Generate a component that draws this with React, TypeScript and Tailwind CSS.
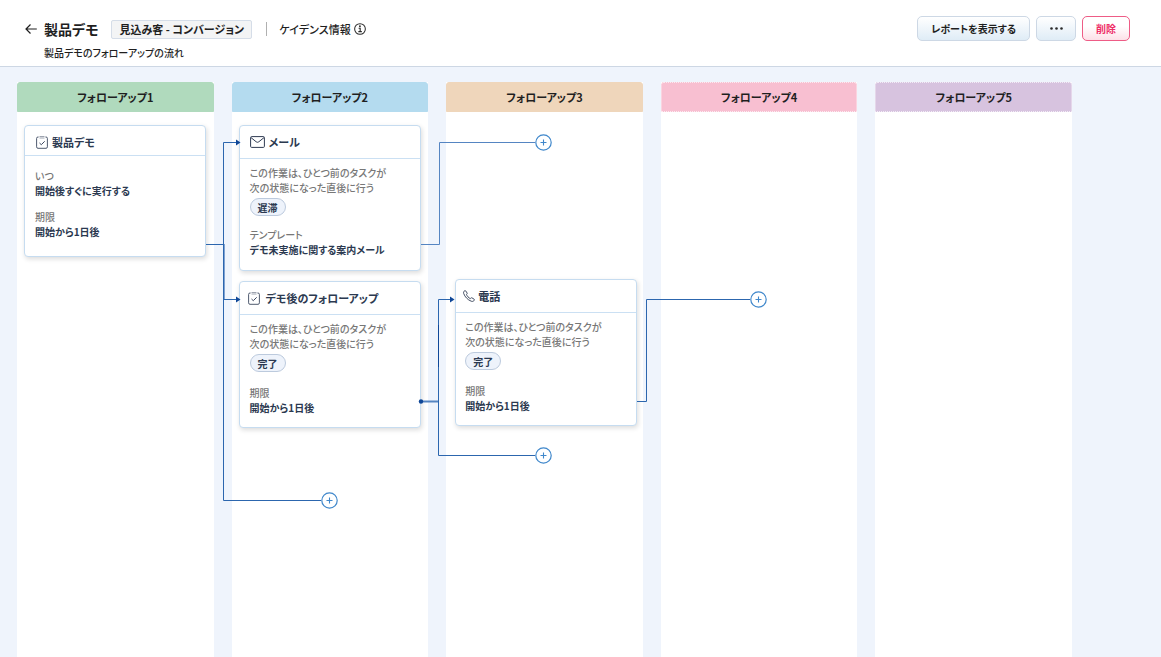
import type { ReactNode } from 'react';

function CheckIcon() {
  return (
    <svg className="h-[13px] w-3 shrink-0" viewBox="0 0 12 13" fill="none" stroke="#3c4860" strokeWidth="0.9" aria-hidden="true">
      <path d="M2.6 1H2Q.6 1 .6 2.4V10.8Q.6 12.3 2 12.3H10Q11.4 12.3 11.4 10.8V2.4Q11.4 1 10 1H9.4" />
      <path d="M3.5 .5H8.5M3.5 2H8.5" strokeWidth="0.5" />
      <path d="M3.5 7L5.3 8.7L8.7 5.3" strokeWidth="1" />
    </svg>
  );
}

function MailIcon() {
  return (
    <svg className="h-3 w-[15px] shrink-0" viewBox="0 0 15 12" fill="none" stroke="#2f3b52" strokeWidth="1" aria-hidden="true">
      <rect x=".6" y=".6" width="13.8" height="10.8" rx="1" />
      <path d="M1 1.6L6.2 5.8Q7.5 6.8 8.8 5.8L14 1.6" />
    </svg>
  );
}

function PhoneIcon() {
  return (
    <svg className="h-3 w-3 shrink-0" viewBox="0 0 12 12" fill="none" stroke="#2f3b52" strokeWidth="0.9" strokeLinejoin="round" aria-hidden="true">
      <path d="M1.1 1.2C1.7.5 2.3.4 2.7.9L4.1 3C4.4 3.5 4.2 3.9 3.5 4.6C4 6 5.7 7.9 7.3 8.6C8.1 7.8 8.5 7.6 9 7.9L11.1 9.2C11.7 9.7 11.4 10.2 10.8 10.8C10.1 11.5 9.2 11.6 8.2 11.2C4.8 9.9 1.8 6.8.7 3.5C.4 2.5.5 1.8 1.1 1.2Z" />
    </svg>
  );
}

function ArrowLeftIcon() {
  return (
    <svg className="h-3 w-3" viewBox="0 0 12 12" fill="none" stroke="#1f1f1f" strokeWidth="1.2" aria-hidden="true">
      <path d="M11.8 6H1M5.5 1.5L1 6L5.5 10.5" />
    </svg>
  );
}

function InfoIcon() {
  return (
    <svg className="h-3 w-3" viewBox="0 0 13 13" fill="none" stroke="#2a2a2a" aria-hidden="true">
      <circle cx="6.5" cy="6.5" r="5.8" strokeWidth="1.1" />
      <path d="M5 5.7H6.7V9.4M4.7 9.4H8.5" strokeWidth="1.2" />
      <circle cx="6.4" cy="3.5" r="1" fill="#2a2a2a" stroke="none" />
    </svg>
  );
}

function Card({ icon, title, head, children }: { icon: ReactNode; title: string; head: string; children: ReactNode }) {
  return (
    <article className="w-[182px] rounded border border-[#c6dcf0] bg-white text-[10px] leading-[15px] text-[#2b3950] shadow-[1px_2px_5px_rgba(0,0,0,0.14)]">
      <h3 className={`flex items-center border-b border-[#cbe0f3] text-[11px] font-bold ${head}`}>
        {icon}
        {title}
      </h3>
      {children}
    </article>
  );
}

function Field({ label, value }: { label: string; value: string }) {
  return (
    <dl>
      <dt className="font-medium text-[#777]">{label}</dt>
      <dd className="font-bold">{value}</dd>
    </dl>
  );
}

function Condition({ status }: { status: string }) {
  return (
    <>
      <p className="font-medium text-[#777]">
        この作業は、ひとつ前のタスクが
        <br />
        次の状態になった直後に行う
      </p>
      <span className="mt-[3px] flex h-[18px] w-9 items-center justify-center rounded-full border border-[#bccadd] bg-[#eef3fb] font-bold">
        {status}
      </span>
    </>
  );
}

function Column({ name, head, children }: { name: string; head: string; children?: ReactNode }) {
  return (
    <section className="flex flex-col bg-white">
      <h2 className={`flex h-[30px] items-center justify-center rounded-t-[3px] border text-[11px] font-bold text-[#1f1f1f] ${head}`}>
        {name}
      </h2>
      {children}
    </section>
  );
}

function AddButton({ place }: { place: string }) {
  return (
    <button type="button" aria-label="追加" className={`absolute h-[17px] w-[17px] rounded-full bg-white ${place}`}>
      <svg viewBox="0 0 17 17" fill="none" stroke="#3f87cb" aria-hidden="true">
        <circle cx="8.5" cy="8.5" r="7.7" strokeWidth="1.2" />
        <path d="M8.5 5.5V11.5M5.5 8.5H11.5" strokeWidth="1.1" />
      </svg>
    </button>
  );
}

export default function App() {
  return (
    <div className="flex min-h-screen flex-col bg-[#eff4fc] font-['Noto_Sans_CJK_JP',sans-serif] text-[#1f1f1f] [font-feature-settings:'palt']">
      <header className="flex items-start justify-between border-b border-[#cdd7e4] bg-white pt-4 pr-[31px] pb-[6px] pl-[25px]">
        <div className="flex flex-col">
          <div className="flex h-[26px] items-center">
            <a href="#back" aria-label="戻る" className="mr-[7px]">
              <ArrowLeftIcon />
            </a>
            <h1 className="text-[14px] leading-5 font-bold">製品デモ</h1>
            <span className="ml-[13px] flex h-[19px] items-center rounded-[2px] border border-[#d5dde8] bg-[#f3f4f5] px-[7px] text-[11px] font-bold">
              見込み客 - コンバージョン
            </span>
            <span className="mr-3 ml-[14px] h-[14px] w-px bg-[#b0b0b0]" />
            <button type="button" className="flex items-center gap-[3px] text-[11px] font-medium">
              ケイデンス情報
              <InfoIcon />
            </button>
          </div>
          <p className="mt-[3px] pl-[19px] text-[10px] leading-[15px] font-medium">製品デモのフォローアップの流れ</p>
        </div>
        <div className="flex gap-[6px] text-[10px] font-bold">
          <button type="button" className="h-[25px] rounded-[5px] border border-[#cdd8e5] bg-linear-to-b from-white to-[#dfecf6] px-[13px]">
            レポートを表示する
          </button>
          <button type="button" aria-label="その他" className="flex h-[25px] w-10 items-center justify-center rounded-[5px] border border-[#cdd8e5] bg-linear-to-b from-white to-[#dfecf6]">
            <svg className="h-[3px] w-[13px]" viewBox="0 0 13 3" fill="#2a2a2a" aria-hidden="true">
              <circle cx="1.5" cy="1.5" r="1.3" />
              <circle cx="6.5" cy="1.5" r="1.3" />
              <circle cx="11.5" cy="1.5" r="1.3" />
            </svg>
          </button>
          <button type="button" className="h-[25px] w-12 rounded-[5px] border border-[#ee5c86] bg-linear-to-b from-white from-40% to-[#fde0e8] text-[#ee2d66]">
            削除
          </button>
        </div>
      </header>

      <main className="relative flex grow flex-col overflow-x-auto">
        <div className="mt-[15px] ml-[17px] grid w-[1055px] grow grid-cols-5 gap-[18px]">
          <Column name="フォローアップ1" head="border-[#b0dabd] bg-[#b0dabd]">
            <div className="pt-[13px] pl-[7px]">
              <Card icon={<CheckIcon />} title="製品デモ" head="h-[30px] gap-1 pl-[11px] pt-[3px]">
                <div className="flex flex-col gap-[11px] px-[10px] pt-3 pb-[17px]">
                  <Field label="いつ" value="開始後すぐに実行する" />
                  <Field label="期限" value="開始から1日後" />
                </div>
              </Card>
            </div>
          </Column>

          <Column name="フォローアップ2" head="border-[#b4dbef] bg-[#b4dbef]">
            <div className="flex flex-col gap-[10px] pt-[13px] pl-[7px]">
              <Card icon={<MailIcon />} title="メール" head="h-[33px] gap-1 pl-[10px]">
                <div className="px-[10px] pt-[6px] pb-[13px]">
                  <Condition status="遅滞" />
                  <div className="mt-[11px]">
                    <Field label="テンプレート" value="デモ未実施に関する案内メール" />
                  </div>
                </div>
              </Card>
              <Card icon={<CheckIcon />} title="デモ後のフォローアップ" head="h-[33px] gap-[6px] pl-2">
                <div className="px-[10px] pt-[6px] pb-3">
                  <Condition status="完了" />
                  <div className="mt-[13px]">
                    <Field label="期限" value="開始から1日後" />
                  </div>
                </div>
              </Card>
            </div>
          </Column>

          <Column name="フォローアップ3" head="border-[#efd6bb] bg-[#efd6bb]">
            <div className="pt-[167px] pl-[9px]">
              <Card icon={<PhoneIcon />} title="電話" head="h-[33px] gap-[3px] pl-[7px]">
                <div className="px-[9px] pt-[6px] pb-3">
                  <Condition status="完了" />
                  <div className="mt-[13px]">
                    <Field label="期限" value="開始から1日後" />
                  </div>
                </div>
              </Card>
            </div>
          </Column>

          <Column name="フォローアップ4" head="border-dotted border-[#fdeaf0] bg-[#f8bfd1]" />
          <Column name="フォローアップ5" head="border-dotted border-[#f3ecf6] bg-[#d7c3df]" />
        </div>

        <svg className="pointer-events-none absolute top-0 left-0 h-[560px] w-[1080px]" viewBox="0 0 1080 560" fill="none" stroke="#2c66ae" strokeWidth="1" aria-hidden="true">
          <path d="M206 177.5H223.5" />
          <path d="M236 75.5H223.5V433.5H322" />
          <path d="M224.5 177V232" stroke="#7fa2d2" />
          <path d="M223 232.5H236" />
          <path d="M421 177.5H439.5V75.5H536" stroke="#5585c2" />
          <path d="M421 334.5H438.5" stroke="#5585c2" strokeWidth="2" />
          <path d="M451 232.5H438.5V388.5H536" />
          <path d="M438.5 258V300" stroke="#0f4797" />
          <path d="M637 334.5H646.5V232.5H751" />
          <g fill="#0f4797" stroke="none">
            <path d="M236 72.5L240.5 75.5L236 78.5Z" />
            <path d="M236 229.5L240.5 232.5L236 235.5Z" />
            <path d="M450 229.5L454.5 232.5L450 235.5Z" />
            <circle cx="421" cy="334.5" r="2.2" />
          </g>
        </svg>
        <AddButton place="left-[535px] top-[67px]" />
        <AddButton place="left-[750px] top-[224px]" />
        <AddButton place="left-[535px] top-[380px]" />
        <AddButton place="left-[321px] top-[425px]" />
      </main>
    </div>
  );
}
